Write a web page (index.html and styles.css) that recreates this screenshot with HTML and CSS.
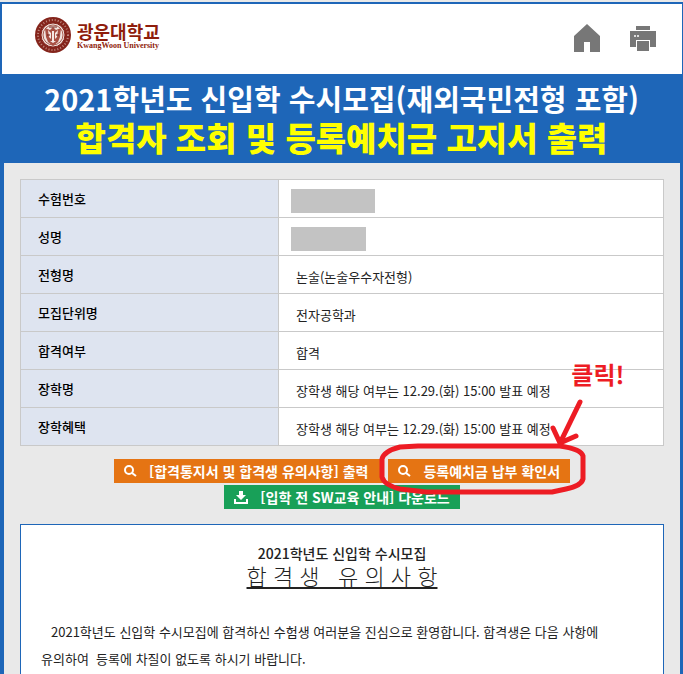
FILE: index.html
```html
<!DOCTYPE html>
<html lang="ko">
	<head>
		<meta charset="utf-8">
		<title>광운대학교 합격자 조회</title>
		<link rel="stylesheet" href="styles.css">
	</head>
	<body>
		<div id="wrap">
			<header id="header">
				<a class="logo" href="#">
					<svg width="38" height="38" viewBox="0 0 38 38" aria-hidden="true">
						<circle cx="19" cy="19" r="18" fill="#84241b"/>
						<circle cx="19" cy="19" r="15" fill="none" stroke="#c08a80" stroke-width="2" stroke-dasharray="1 2"/>
						<circle cx="19" cy="19" r="12" fill="#f1e4df" stroke="#84241b"/>
						<circle cx="19" cy="19" r="10" fill="none" stroke="#a85c50" stroke-width="1"/>
						<path d="M11 12l5 2 3-3 3 3 5-2-1 9-2 5-5 4-5-4-2-5z" fill="#a85044"/>
						<path d="M14 14l3 3v6l-2-2zM24 14l-3 3v6l2-2zM18 15h2v10h-2zM16 25l3 2 3-2" fill="#f5e9e5"/>
						<path d="M13 19h3M22 19h3M15 11h8" stroke="#6f1c14" stroke-width="1"/>
					</svg>
					<span class="name">
						<strong>광운대학교</strong>
						<em>KwangWoon University</em>
					</span>
				</a>
				<nav class="util">
					<a href="#" aria-label="홈">
						<svg width="26" height="28" viewBox="0 0 26 28"><path d="M13 0L26 12V28H16V18H10V28H0V12z" fill="#777"/></svg>
					</a>
					<button type="button" aria-label="인쇄">
						<svg width="26" height="26" viewBox="0 0 26 26">
							<path d="M6 0h14v4H6zM0 5h26v16H0z" fill="#777"/>
							<path d="M6 14h14v12H6z" fill="#fff"/>
							<path d="M7 15h12v10H7z" fill="#777"/>
							<path d="M4 9h2v2H4zM7 9h2v2H7z" fill="#ddd"/>
						</svg>
					</button>
				</nav>
			</header>
			<h1 id="title">
				<span>2021학년도 신입학 수시모집(재외국민전형 포함)</span>
				<b>합격자 조회 및 등록예치금 고지서 출력</b>
			</h1>
			<main id="content">
				<table class="info">
					<tr><th scope="row">수험번호</th><td class="masked"><i class="mask"></i></td></tr>
					<tr><th scope="row">성명</th><td class="masked"><i class="mask short"></i></td></tr>
					<tr><th scope="row">전형명</th><td>논술(논술우수자전형)</td></tr>
					<tr><th scope="row">모집단위명</th><td>전자공학과</td></tr>
					<tr><th scope="row">합격여부</th><td>합격</td></tr>
					<tr><th scope="row">장학명</th><td>장학생 해당 여부는 12.29.(화) 15:00 발표 예정</td></tr>
					<tr><th scope="row">장학혜택</th><td>장학생 해당 여부는 12.29.(화) 15:00 발표 예정</td></tr>
				</table>
				<div class="btns">
					<button type="button" class="btn wide">
						<svg width="13" height="12" viewBox="0 0 13 12"><circle cx="5" cy="5" r="4" fill="none" stroke="#fff" stroke-width="2"/><path d="M8 8l4 3" stroke="#fff" stroke-width="2"/></svg>
						<span>[합격통지서 및 합격생 유의사항] 출력</span>
					</button>
					<div class="pay">
						<button type="button" class="btn">
							<svg width="13" height="12" viewBox="0 0 13 12"><circle cx="5" cy="5" r="4" fill="none" stroke="#fff" stroke-width="2"/><path d="M8 8l4 3" stroke="#fff" stroke-width="2"/></svg>
							<span>등록예치금 납부 확인서</span>
						</button>
						<!-- 클릭 안내 표시 -->
						<div class="guide">
							<strong>클릭!</strong>
							<svg width="216" height="140" viewBox="0 0 216 140" aria-hidden="true">
								<g fill="none" stroke="#ed1c24" stroke-width="5" stroke-linecap="round" stroke-linejoin="round">
									<path d="M204 47L184 88M177 73L184 88L200 81"/>
									<path d="M24 92L42 91H184Q205 94 207 101V124Q205 131 190 134L176 137H50L24 134Q8 130 6 122V104Q8 96 24 92"/>
								</g>
							</svg>
						</div>
					</div>
					<button type="button" class="btn green">
						<svg width="14" height="13" viewBox="0 0 14 13"><path d="M5 0h4v4h3L7 9 2 4h3z" fill="#fff"/><path d="M1 8v4h12V8" fill="none" stroke="#fff" stroke-width="2"/></svg>
						<span>[입학 전 SW교육 안내] 다운로드</span>
					</button>
				</div>
				<section class="notice">
					<h2>2021학년도 신입학 수시모집</h2>
					<h3>합 격 생 &nbsp; 유 의 사 항</h3>
					<p>2021학년도 신입학 수시모집에 합격하신 수험생 여러분을 진심으로 환영합니다. 합격생은 다음 사항에 유의하여 &nbsp;등록에 차질이 없도록 하시기 바랍니다.</p>
				</section>
			</main>
		</div>
	</body>
</html>
```
FILE: styles.css
```css
*{
	margin: 0;
	padding: 0;
	box-sizing: border-box;
}
body{
	font-family: "Noto Sans CJK KR", sans-serif;
	font-size: 13px;
	color: #222;
	background: #e9e9e9;
}
button{
	font: inherit;
	border: 0;
	background: none;
	cursor: pointer;
}
a{
	text-decoration: none;
}
svg{
	display: block;
}
#wrap{
	min-height: 100vh;
	padding-top: 2px;
	display: flex;
	flex-direction: column;
}
#header{
	height: 72px;
	padding: 0 26px 0 32px;
	border: solid #1e66b8;
	border-width: 2px 1px 0 2px;
	background: #fff;
	display: flex;
	justify-content: space-between;
}
.logo{
	display: flex;
	height: 38px;
	margin-top: 12px;
	color: #8f1d0c;
}
.name{
	margin: 5px 0 0 5px;
}
.name strong{
	display: block;
	font-size: 18px;
	line-height: 20px;
	font-weight: 700;
}
.name em{
	display: block;
	font: bold 8px/10px "Liberation Serif", serif;
}
.util{
	display: flex;
	align-items: flex-end;
	gap: 30px;
	padding-bottom: 22px;
}
#title{
	padding: 5px 0 6px;
	background: #1e66b8;
	color: #fff;
	text-align: center;
	font-weight: 700;
}
#title span{
	display: block;
	font-size: 29px;
	line-height: 38px;
}
#title b{
	display: block;
	font-size: 33px;
	line-height: 40px;
	color: #ff0;
}
#content{
	flex: 1;
	display: flex;
	flex-direction: column;
	padding: 16px 16px 0;
	border: solid #1e66b8;
	border-width: 0 3px 0 4px;
}
.info{
	width: 100%;
	border-collapse: collapse;
	table-layout: fixed;
	background: #fff;
}
.info th,
.info td{
	height: 38px;
	border: 1px solid #c9c9c9;
	line-height: 20px;
	text-align: left;
}
.info th{
	width: 258px;
	padding: 0 17px;
	background: #dee4f0;
	color: #000;
	font-weight: 500;
}
.info td{
	padding: 4px 17px 0;
}
.info .masked{
	padding: 4px 12px 0;
}
.mask{
	display: block;
	width: 84px;
	height: 24px;
	background: #c3c3c3;
}
.mask.short{
	width: 75px;
}
.btns{
	display: flex;
	flex-wrap: wrap;
	justify-content: center;
	gap: 2px 4px;
	padding: 13px 0 15px;
}
.btn{
	display: flex;
	align-items: center;
	gap: 12px;
	height: 24px;
	padding: 0 10px;
	background: #e57413;
	color: #fff;
	font-size: 14px;
	line-height: 20px;
	font-weight: 700;
}
.wide{
	padding-right: 16px;
}
.green{
	background: #18a058;
}
.pay{
	position: relative;
}
.guide{
	position: absolute;
	left: -12px;
	bottom: -12px;
	z-index: 1;
	width: 216px;
	pointer-events: none;
}
.guide strong{
	position: absolute;
	right: -32px;
	top: 4px;
	font-size: 24px;
	line-height: 30px;
	color: #ed1c24;
}
.notice{
	flex: 1;
	padding: 18px 20px;
	border: 1px solid #1e66b8;
	border-bottom: 0;
	background: #fff;
}
.notice h2{
	font-size: 14px;
	line-height: 20px;
	font-weight: 500;
	text-align: center;
}
.notice h3{
	font-size: 22px;
	line-height: 24px;
	font-weight: 300;
	text-align: center;
	text-decoration: underline;
}
.notice p{
	margin-top: 31px;
	line-height: 27px;
	text-indent: 10px;
	word-break: keep-all;
}
```
